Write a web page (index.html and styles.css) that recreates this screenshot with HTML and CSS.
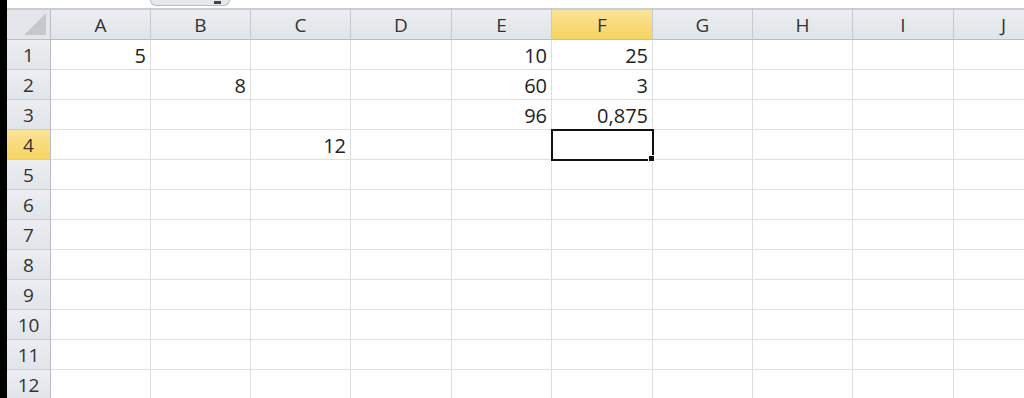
FILE: index.html
```html
<!DOCTYPE html>
<html lang="en">
<head>
    <meta charset="UTF-8">
    <title>Sheet1</title>
    <link rel="stylesheet" href="styles.css">
</head>
<body>
    <div class="window">
        <div class="edge"></div>
        <div class="sheet">
            <div class="formula-bar">
                <div class="name-tab"><span class="fx"></span></div>
            </div>
            <div class="grid">
                <div class="corner"><span class="corner-mark"></span></div>
                <div class="col-head">A</div>
                <div class="col-head">B</div>
                <div class="col-head">C</div>
                <div class="col-head">D</div>
                <div class="col-head">E</div>
                <div class="col-head active">F</div>
                <div class="col-head">G</div>
                <div class="col-head">H</div>
                <div class="col-head">I</div>
                <div class="col-head">J</div>

                <div class="row-head">1</div>
                <div class="cell">5</div><div class="cell"></div><div class="cell"></div><div class="cell"></div>
                <div class="cell">10</div><div class="cell">25</div><div class="cell"></div><div class="cell"></div>
                <div class="cell"></div><div class="cell"></div>

                <div class="row-head">2</div>
                <div class="cell"></div><div class="cell">8</div><div class="cell"></div><div class="cell"></div>
                <div class="cell">60</div><div class="cell">3</div><div class="cell"></div><div class="cell"></div>
                <div class="cell"></div><div class="cell"></div>

                <div class="row-head">3</div>
                <div class="cell"></div><div class="cell"></div><div class="cell"></div><div class="cell"></div>
                <div class="cell">96</div><div class="cell">0,875</div><div class="cell"></div><div class="cell"></div>
                <div class="cell"></div><div class="cell"></div>

                <div class="row-head active">4</div>
                <div class="cell"></div><div class="cell"></div><div class="cell">12</div><div class="cell"></div>
                <div class="cell"></div><div class="cell selected"></div><div class="cell"></div><div class="cell"></div>
                <div class="cell"></div><div class="cell"></div>
            </div>
        </div>
    </div>

    <script>
        // empty rows 5..12
        const grid = document.querySelector('.grid');
        for (let r = 5; r <= 12; r++) {
            const head = document.createElement('div');
            head.className = 'row-head';
            head.textContent = r;
            grid.appendChild(head);
            for (let c = 0; c < 10; c++) {
                const cell = document.createElement('div');
                cell.className = 'cell';
                grid.appendChild(cell);
            }
        }
    </script>
</body>
</html>
```

FILE: styles.css
```css
body {
    margin: 0;
    background: #fff;
    font-family: 'Open Sans', sans-serif;
    overflow: hidden;
}

.window {
    display: flex;
    height: 398px;
}

.edge {
    width: 7px;
    flex: none;
    background: #000;
}

.sheet {
    flex: 1;
    overflow: hidden;
}

.formula-bar {
    height: 8px;
    background: #fff;
    border-bottom: 2px solid #c9ccd1;
    padding-left: 143px;
}

.name-tab {
    width: 78px;
    height: 5px;
    background: #e6e7e9;
    border: 1px solid #b9bcc1;
    border-top: none;
    border-radius: 0 0 6px 6px;
    position: relative;
}

.fx {
    position: absolute;
    right: 8px;
    top: 1px;
    width: 7px;
    height: 3px;
    background: #444;
}

.grid {
    display: grid;
    grid-template-columns: 44px 100px 100px 100px 101px 100px 101px 100px 100px 101px 100px;
    grid-auto-rows: 30px;
}

.corner {
    background: #e4e6ea;
    border-right: 1px solid #b9bdc4;
    border-bottom: 1px solid #b9bdc4;
    box-sizing: border-box;
    position: relative;
}

.corner-mark {
    position: absolute;
    right: 4px;
    bottom: 4px;
    width: 0;
    height: 0;
    border-left: 22px solid transparent;
    border-bottom: 22px solid #c5c8cc;
}

.col-head, .row-head {
    background: linear-gradient(#eceef1, #e1e4e8);
    color: #333;
    font-size: 19px;
    display: flex;
    align-items: center;
    justify-content: center;
    box-sizing: border-box;
    padding-top: 1px;
}

.col-head {
    border-right: 1px solid #c6cad0;
    border-bottom: 1px solid #b9bdc4;
}

.row-head {
    border-right: 1px solid #b9bdc4;
    border-bottom: 1px solid #c9cdd2;
}

.col-head.active, .row-head.active {
    background: linear-gradient(#fbe49a, #f8d35f);
    color: #333;
}

.cell {
    border-right: 1px solid #dddfe2;
    border-bottom: 1px solid #dddfe2;
    box-sizing: border-box;
    font-size: 20px;
    color: #222;
    display: flex;
    align-items: center;
    justify-content: flex-end;
    padding: 2px 4px 0 0;
}

.cell.selected {
    outline: 2px solid #111;
    outline-offset: -1px;
    position: relative;
}

.cell.selected::after {
    content: '';
    position: absolute;
    right: -3px;
    bottom: -3px;
    width: 5px;
    height: 5px;
    background: #111;
    border: 1px solid #fff;
}
```
